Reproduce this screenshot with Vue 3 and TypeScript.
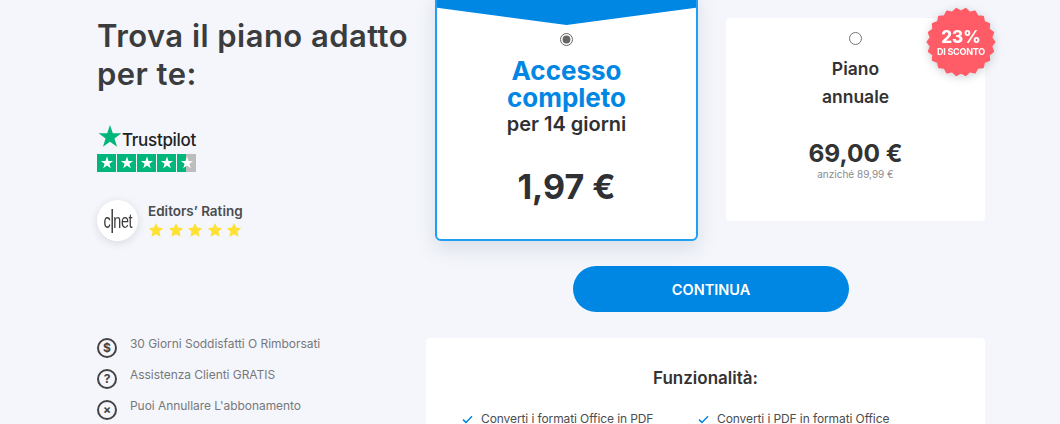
<script setup lang="ts">
const points = [
  { label: '30 Giorni Soddisfatti O Rimborsati', glyph: '$' },
  { label: 'Assistenza Clienti GRATIS', glyph: '?' },
  { label: "Puoi Annullare L'abbonamento", glyph: '×' },
]

const features = ['Converti i formati Office in PDF', 'Converti i PDF in formati Office']

const STAR = '12,1 14.6,8.6 22.5,8.6 16.1,13.3 18.5,21 12,16.3 5.5,21 7.9,13.3 1.5,8.6 9.4,8.6'
const FAT_STAR = '12,1.5 15.2,8.3 22.8,9.2 17.2,14.4 18.7,22 12,18.2 5.3,22 6.8,14.4 1.2,9.2 8.8,8.3'

// zigzag edge of the discount badge, corners get rounded by the stroke
function badgePoints(): string {
  const n = 22
  const out: string[] = []
  for (let i = 0; i < n * 2; i++) {
    const r = i % 2 === 0 ? 33.5 : 30.5
    const a = (i / (n * 2)) * Math.PI * 2
    out.push(`${(35 + r * Math.cos(a)).toFixed(2)},${(35 + r * Math.sin(a)).toFixed(2)}`)
  }
  return out.join(' ')
}
const badge = badgePoints()
</script>

<template>
  <div class="page">
    <aside class="left">
      <h1>Trova il piano adatto per te:</h1>

      <div class="trustpilot">
        <div class="tp-logo">
          <svg width="26" height="26" viewBox="0 0 24 24"><polygon :points="STAR" fill="#00b67a" /></svg>
          <span>Trustpilot</span>
        </div>
        <div class="tp-stars">
          <span v-for="n in 5" :key="n" class="tp-box" :class="{ half: n === 5 }">
            <svg width="14" height="14" viewBox="0 0 24 24"><polygon :points="STAR" fill="#fff" /></svg>
          </span>
        </div>
      </div>

      <div class="cnet">
        <div class="cnet-logo">
          <div class="cnet-word"><span>c</span><i></i><span>net</span></div>
        </div>
        <div>
          <div class="cnet-title">Editors’ Rating</div>
          <div class="cnet-stars">
            <svg v-for="n in 5" :key="n" width="16" height="16" viewBox="0 0 24 24"><polygon :points="FAT_STAR" fill="#ffe135" /></svg>
          </div>
        </div>
      </div>

      <ul class="points">
        <li v-for="p in points" :key="p.label">
          <span class="point-icon">{{ p.glyph }}</span>
          <span class="point-label">{{ p.label }}</span>
        </li>
      </ul>
    </aside>

    <main class="right">
      <div class="plans">
        <div class="plan selected">
          <svg class="ribbon" width="260" height="23" viewBox="0 0 260 23" preserveAspectRatio="none">
            <polygon points="0,0 260,0 260,11 130,23 0,11" fill="#0086e3" />
          </svg>
          <input class="radio" type="radio" name="plan" checked />
          <div class="plan-title">Accesso<br />completo</div>
          <div class="plan-sub">per 14 giorni</div>
          <div class="plan-price">1,97 €</div>
        </div>

        <div class="plan annual">
          <input class="radio" type="radio" name="plan" />
          <div class="annual-title">Piano</div>
          <div class="annual-title">annuale</div>
          <div class="annual-price">69,00 €</div>
          <div class="annual-old">anziché 89,99 €</div>
          <div class="badge">
            <svg width="70" height="70" viewBox="0 0 70 70">
              <polygon :points="badge" fill="#ff5c67" stroke="#ff5c67" stroke-width="2" stroke-linejoin="round" />
            </svg>
            <div class="badge-text">
              <b>23%</b>
              <small>DI SCONTO</small>
            </div>
          </div>
        </div>
      </div>

      <button class="cta" type="button">CONTINUA</button>

      <section class="features">
        <h2>Funzionalità:</h2>
        <div class="feature-list">
          <div v-for="f in features" :key="f" class="feature">
            <svg width="11" height="9" viewBox="0 0 11 9"><path d="M1 4.6 4 7.4 10 1.2" fill="none" stroke="#0086e3" stroke-width="1.5" /></svg>
            <span>{{ f }}</span>
          </div>
        </div>
      </section>
    </main>
  </div>
</template>

<style>
html, body {
  margin: 0;
  height: 424px;
  overflow: hidden;
  background: #f4f6fb;
}
</style>

<style scoped>
.page {
  display: flex;
  height: 424px;
  overflow: hidden;
  padding-left: 97px;
  font-family: Inter, "Noto Sans", sans-serif;
  color: #3a3a3c;
  box-sizing: border-box;
}

.left {
  width: 329px;
  flex: none;
  padding-top: 17px;
}

h1 {
  margin: 0;
  width: 320px;
  font-size: 31px;
  line-height: 38px;
  font-weight: 600;
  color: #3b3c3e;
  letter-spacing: 0.45px;
}

.trustpilot {
  margin-top: 31px;
}

.tp-logo {
  display: flex;
  align-items: center;
  height: 26px;
}

.tp-logo span {
  font-size: 17px;
  font-weight: 500;
  color: #222;
  letter-spacing: -0.3px;
  margin: 5px 0 0 -1px;
}

.tp-stars {
  display: flex;
  gap: 1px;
  margin-top: 4px;
}

.tp-box {
  width: 19px;
  height: 18px;
  background: #00b67a;
  display: flex;
  align-items: center;
  justify-content: center;
}

.tp-box.half {
  background: linear-gradient(90deg, #00b67a 50%, #bdbdbd 50%);
}

.cnet {
  display: flex;
  align-items: center;
  gap: 10px;
  margin-top: 28px;
}

.cnet-logo {
  width: 41px;
  height: 41px;
  border-radius: 50%;
  background: #fff;
  box-shadow: 0 2px 8px rgba(40, 50, 80, 0.14);
  display: flex;
  align-items: center;
  justify-content: center;
}

.cnet-word {
  display: flex;
  align-items: center;
  font-family: "Liberation Sans", sans-serif;
  font-size: 20px;
  line-height: 20px;
  color: #3a3a3a;
  letter-spacing: -0.5px;
  transform: scaleX(0.72);
}

.cnet-word i {
  width: 2px;
  height: 24px;
  background: #3a3a3a;
  margin: 0 1px;
}

.cnet-title {
  font-size: 13.5px;
  font-weight: 600;
  color: #4b4c4f;
  line-height: 16px;
}

.cnet-stars {
  display: flex;
  gap: 3.5px;
  margin-top: 3px;
}

.points {
  list-style: none;
  margin: 0;
  padding: 0;
  margin-top: 95px;
}

.points li {
  display: flex;
  align-items: flex-start;
  gap: 13px;
  height: 31px;
}

.point-icon {
  width: 20px;
  height: 20px;
  box-sizing: border-box;
  border: 2px solid #444;
  border-radius: 50%;
  display: flex;
  align-items: center;
  justify-content: center;
  font-size: 12px;
  font-weight: 700;
  color: #444;
  margin-top: 1.5px;
  flex: none;
}

.point-label {
  font-size: 12px;
  line-height: 16px;
  color: #77787c;
  letter-spacing: -0.05px;
}

.right {
  width: 559px;
  flex: none;
  position: relative;
}

.plans {
  display: flex;
  align-items: flex-start;
  gap: 28px;
  padding-left: 9px;
}

.plan {
  position: relative;
  background: #fff;
  text-align: center;
  box-sizing: border-box;
}

.selected {
  width: 263px;
  height: 251px;
  margin-top: -10px;
  border: 2px solid #1e9ff2;
  border-radius: 6px;
  padding-top: 41px;
  box-shadow: 0 8px 20px rgba(60, 80, 120, 0.14);
}

.ribbon {
  position: absolute;
  top: 0;
  left: 0;
  width: 100%;
  height: 33px;
}

.radio {
  display: block;
  margin: 0 auto;
  width: 13px;
  height: 13px;
  accent-color: #666;
}

.plan-title {
  margin-top: 11px;
  font-size: 26px;
  line-height: 27px;
  font-weight: 700;
  color: #0086e3;
}

.plan-sub {
  margin-top: -1px;
  font-size: 20px;
  line-height: 28px;
  font-weight: 600;
  color: #2f3033;
}

.plan-price {
  margin-top: 26px;
  font-size: 34px;
  line-height: 46px;
  font-weight: 700;
  color: #2f3033;
}

.annual {
  width: 259px;
  height: 203px;
  margin-top: 18px;
  border-radius: 4px;
  padding-top: 14px;
}

.annual-title {
  font-size: 17.5px;
  line-height: 28px;
  font-weight: 600;
  color: #333;
}

.annual-title:first-of-type {
  margin-top: 10px;
}

.annual-price {
  margin-top: 27px;
  font-size: 24.5px;
  line-height: 30px;
  font-weight: 700;
  color: #333;
}

.annual-old {
  font-size: 10px;
  line-height: 12px;
  color: #8a8b8f;
}

.badge {
  position: absolute;
  top: -11px;
  left: 200px;
  width: 70px;
  height: 70px;
  filter: drop-shadow(0 2px 4px rgba(60, 70, 90, 0.25));
}

.badge-text {
  position: absolute;
  inset: 0;
  display: flex;
  flex-direction: column;
  align-items: center;
  justify-content: center;
  color: #fff;
}

.badge-text b {
  font-size: 17px;
  line-height: 19px;
  font-weight: 800;
}

.badge-text small {
  font-size: 9px;
  line-height: 10px;
  font-weight: 700;
  letter-spacing: -0.25px;
}

.cta {
  display: block;
  width: 276px;
  height: 46px;
  margin: 25px 0 0 147px;
  border: 0;
  border-radius: 23px;
  background: #0086e3;
  color: #fff;
  font-family: inherit;
  font-size: 14.5px;
  font-weight: 600;
}

.features {
  margin-top: 26px;
  background: #fff;
  border-radius: 4px;
  height: 200px;
  padding-top: 30px;
  box-sizing: border-box;
}

h2 {
  margin: 0;
  text-align: center;
  font-size: 17px;
  line-height: 20px;
  font-weight: 600;
  color: #333;
}

.feature-list {
  display: grid;
  grid-template-columns: 236px 1fr;
  padding: 23px 0 0 36px;
}

.feature {
  display: flex;
  align-items: center;
  gap: 8px;
  font-size: 12px;
  line-height: 16px;
  color: #4b4c4f;
  letter-spacing: -0.1px;
}
</style>
